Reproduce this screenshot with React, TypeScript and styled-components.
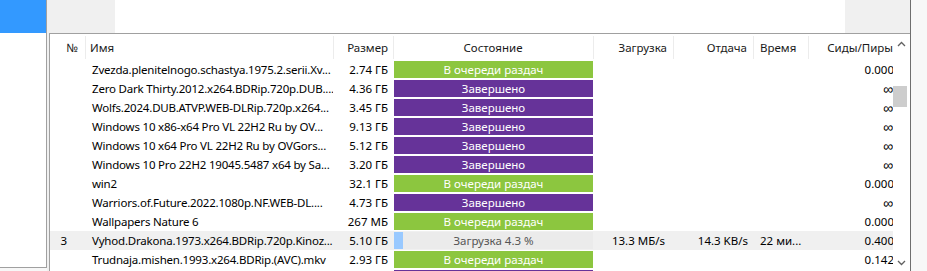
import React from 'react';
import styled, { createGlobalStyle } from 'styled-components';

type Status = 'queue' | 'done' | 'down';

interface Torrent {
  num?: string;
  name: string;
  size: string;
  status: Status;
  progress?: number;
  down?: string;
  up?: string;
  eta?: string;
  ratio: string;
  active?: boolean;
}

const COLS = '35px 248px 60px 200px 80px 80px 55px 86px';

const torrents: Torrent[] = [
  { name: 'Zvezda.plenitelnogo.schastya.1975.2.serii.Xv...', size: '2.74 ГБ', status: 'queue', ratio: '0.000' },
  { name: 'Zero Dark Thirty.2012.x264.BDRip.720p.DUB....', size: '4.36 ГБ', status: 'done', ratio: '∞' },
  { name: 'Wolfs.2024.DUB.ATVP.WEB-DLRip.720p.x264...', size: '3.45 ГБ', status: 'done', ratio: '∞' },
  { name: 'Windows 10 x86-x64 Pro VL 22H2 Ru by OV...', size: '9.13 ГБ', status: 'done', ratio: '∞' },
  { name: 'Windows 10 x64 Pro VL 22H2 Ru by OVGors...', size: '5.12 ГБ', status: 'done', ratio: '∞' },
  { name: 'Windows 10 Pro 22H2 19045.5487 x64 by Sa...', size: '3.20 ГБ', status: 'done', ratio: '∞' },
  { name: 'win2', size: '32.1 ГБ', status: 'queue', ratio: '0.000' },
  { name: 'Warriors.of.Future.2022.1080p.NF.WEB-DL....', size: '4.73 ГБ', status: 'done', ratio: '∞' },
  { name: 'Wallpapers Nature 6', size: '267 МБ', status: 'queue', ratio: '0.000' },
  {
    num: '3',
    name: 'Vyhod.Drakona.1973.x264.BDRip.720p.Kinoz...',
    size: '5.10 ГБ',
    status: 'down',
    progress: 4.3,
    down: '13.3 МБ/s',
    up: '14.3 KB/s',
    eta: '22 ми...',
    ratio: '0.400',
    active: true,
  },
  { name: 'Trudnaja.mishen.1993.x264.BDRip.(AVC).mkv', size: '2.93 ГБ', status: 'queue', ratio: '0.142' },
  { name: 'Ty.2023.WEB-DL.1080p', size: '1.20 ГБ', status: 'done', ratio: '∞' },
];

const GlobalStyle = createGlobalStyle`
  html, body {
    margin: 0;
    padding: 0;
  }
  body {
    width: 927px;
    height: 271px;
    overflow: hidden;
    background: #f7f7f7;
    font-family: "Segoe UI", "Noto Sans", sans-serif;
    font-size: 11.5px;
    color: #000;
  }
`;

const Page = styled.div`
  display: flex;
  height: 271px;
  overflow: hidden;
`;

const SidePane = styled.div`
  width: 46px;
  height: 267px;
  flex: none;
  background: #fff;
  border-right: 1px solid #a0a0a0;
  border-bottom: 1px solid #a0a0a0;
`;

const SideTab = styled.div`
  height: 33px;
  background: #3399ff;
`;

const Gutter = styled.div`
  width: 2px;
  flex: none;
  background: #f0f0f0;
`;

const Main = styled.div`
  width: 861px;
  flex: none;
  display: flex;
  flex-direction: column;
  border-right: 1px solid #6e6e6e;
`;

const TopStrip = styled.div`
  height: 33px;
  flex: none;
  display: grid;
  grid-template-columns: 66px 1fr 65px;
`;

const StripPart = styled.div<{ $light?: boolean }>`
  background: ${p => (p.$light ? '#ffffff' : '#f0f0f0')};
`;

const TableBox = styled.div`
  flex: 1;
  display: flex;
  min-height: 0;
  background: #fff;
  border-top: 1px solid #a0a0a0;
  border-left: 1px solid #a0a0a0;
`;

const Viewport = styled.div`
  width: 843px;
  flex: none;
  overflow: hidden;
`;

const HeaderRow = styled.div`
  display: grid;
  grid-template-columns: ${COLS};
  height: 26px;
`;

const HeadCell = styled.div<{ $align: string; $pl?: number; $pr?: number; $sep?: boolean }>`
  position: relative;
  display: flex;
  align-items: center;
  justify-content: ${p => p.$align};
  padding: 0 ${p => p.$pr ?? 0}px 0 ${p => p.$pl ?? 0}px;
  white-space: nowrap;
  overflow: hidden;
  color: #1a1a1a;

  &::before {
    content: '';
    display: ${p => (p.$sep ? 'block' : 'none')};
    position: absolute;
    left: 0;
    top: 2px;
    bottom: 1px;
    width: 1px;
    background: #ececec;
  }
`;

const Row = styled.div<{ $active?: boolean }>`
  display: grid;
  grid-template-columns: ${COLS};
  height: 19px;
  background: ${p => (p.$active ? '#f0f0f0' : 'transparent')};
`;

const Cell = styled.div<{ $align: string; $pl?: number; $pr?: number }>`
  display: flex;
  align-items: center;
  justify-content: ${p => p.$align};
  padding: 0 ${p => p.$pr ?? 0}px 0 ${p => p.$pl ?? 0}px;
  white-space: nowrap;
  overflow: hidden;
  line-height: 19px;
`;

const NameCell = styled(Cell)`
  letter-spacing: -0.2px;
`;

const Infinity = styled.span`
  font-size: 14px;
  line-height: 19px;
  margin-right: 1px;
`;

const StatusCell = styled.div`
  display: flex;
  padding: 1px 0 1px 1px;
`;

const Bar = styled.div<{ $status: Status }>`
  position: relative;
  flex: 1;
  display: flex;
  align-items: center;
  justify-content: center;
  overflow: hidden;
  background: ${p => (p.$status === 'queue' ? '#8cc63f' : p.$status === 'done' ? '#663399' : '#ebebeb')};
  color: ${p => (p.$status === 'down' ? '#555' : '#fff')};
`;

const BarFill = styled.div`
  position: absolute;
  left: 0;
  top: 0;
  bottom: 0;
  background: #99c9ff;
`;

const BarLabel = styled.span`
  position: relative;
`;

const ScrollBar = styled.div`
  width: 17px;
  flex: none;
  display: flex;
  flex-direction: column;
  background: #fff;
`;

const ScrollButton = styled.div<{ $up?: boolean }>`
  height: 17px;
  flex: none;
  display: flex;
  align-items: center;
  justify-content: center;
  padding-top: ${p => (p.$up ? 1 : 0)}px;
`;

const ScrollTrack = styled.div`
  flex: 1;
  padding: 34px 3px 0 0;
`;

const Thumb = styled.div`
  height: 21px;
  background: #cdcdcd;
`;

const Chevron: React.FC<{ up?: boolean }> = ({ up }) => (
  <svg width="9" height="6" viewBox="0 0 9 6">
    <polyline
      points={up ? '1,5 4.5,1.5 8,5' : '1,1 4.5,4.5 8,1'}
      fill="none"
      stroke="#606060"
      strokeWidth="1.3"
    />
  </svg>
);

const statusLabel = (t: Torrent) =>
  t.status === 'queue' ? 'В очереди раздач' : t.status === 'done' ? 'Завершено' : `Загрузка ${t.progress} %`;

const App: React.FC = () => (
  <>
    <GlobalStyle />
    <Page>
      <SidePane>
        <SideTab />
      </SidePane>
      <Gutter />
      <Main>
        <TopStrip>
          <StripPart />
          <StripPart $light />
          <StripPart />
        </TopStrip>
        <TableBox>
          <Viewport>
            <HeaderRow>
              <HeadCell $align="flex-end" $pr={7}>№</HeadCell>
              <HeadCell $align="flex-start" $pl={5} $sep>Имя</HeadCell>
              <HeadCell $align="flex-end" $pr={5} $sep>Размер</HeadCell>
              <HeadCell $align="center" $sep>Состояние</HeadCell>
              <HeadCell $align="flex-end" $pr={6} $sep>Загрузка</HeadCell>
              <HeadCell $align="flex-end" $pr={6} $sep>Отдача</HeadCell>
              <HeadCell $align="flex-start" $pl={7} $sep>Время</HeadCell>
              <HeadCell $align="flex-end" $pr={1} $sep>Сиды/Пиры</HeadCell>
            </HeaderRow>
            {torrents.map(t => (
              <Row key={t.name} $active={t.active}>
                <Cell $align="flex-end" $pr={18}>{t.num ?? ''}</Cell>
                <NameCell $align="flex-start" $pl={7}>{t.name}</NameCell>
                <Cell $align="flex-end" $pr={5}>{t.size}</Cell>
                <StatusCell>
                  <Bar $status={t.status}>
                    {t.status === 'down' && <BarFill style={{ width: `${t.progress}%` }} />}
                    <BarLabel>{statusLabel(t)}</BarLabel>
                  </Bar>
                </StatusCell>
                <Cell $align="flex-end" $pr={8}>{t.down ?? ''}</Cell>
                <Cell $align="flex-end" $pr={5}>{t.up ?? ''}</Cell>
                <Cell $align="flex-start" $pl={7}>{t.eta ?? ''}</Cell>
                <Cell $align="flex-end" $pr={0}>
                  {t.ratio === '∞' ? <Infinity>∞</Infinity> : t.ratio}
                </Cell>
              </Row>
            ))}
          </Viewport>
          <ScrollBar>
            <ScrollButton $up>
              <Chevron up />
            </ScrollButton>
            <ScrollTrack>
              <Thumb />
            </ScrollTrack>
            <ScrollButton>
              <Chevron />
            </ScrollButton>
          </ScrollBar>
        </TableBox>
      </Main>
    </Page>
  </>
);

export default App;
